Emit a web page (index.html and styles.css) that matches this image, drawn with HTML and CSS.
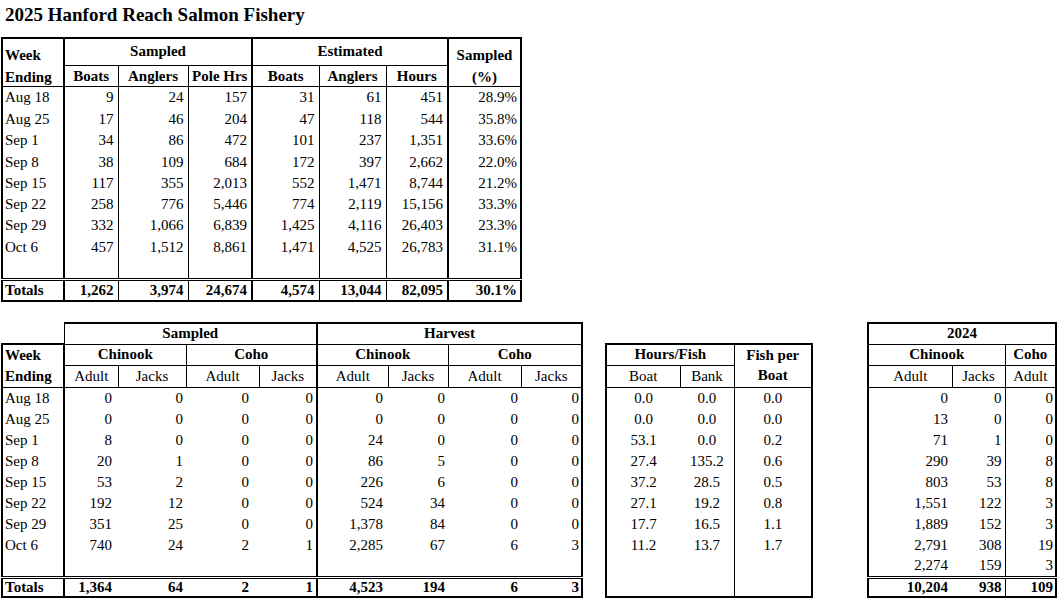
FILE: index.html
```html
<!DOCTYPE html>
<html lang="en">
<head>
<meta charset="utf-8">
<title>2025 Hanford Reach Salmon Fishery</title>
<link rel="stylesheet" href="styles.css">
</head>
<body>
<div class="page">
  <h1 class="title">2025 Hanford Reach Salmon Fishery</h1>

  <table class="sheet effort">
    <colgroup>
      <col class="w62"><col class="w54"><col class="w70"><col class="w64">
      <col class="w67"><col class="w67"><col class="w62"><col class="w73">
    </colgroup>
    <thead>
      <tr class="h27">
        <th rowspan="2" class="lbl stack tk-r"><span class="ln">Week</span><span class="ln">Ending</span></th>
        <th colspan="3" class="grp tk-r">Sampled</th>
        <th colspan="3" class="grp tk-r">Estimated</th>
        <th rowspan="2" class="stack"><span class="ln">Sampled</span><span class="ln">(%)</span></th>
      </tr>
      <tr class="h21">
        <th class="hb low">Boats</th><th class="hb low">Anglers</th><th class="hb low tk-r">Pole Hrs</th>
        <th class="hb low">Boats</th><th class="hb low">Anglers</th><th class="hb low tk-r">Hours</th>
      </tr>
    </thead>
    <tbody>
      <tr class="h22"><td class="lbl tk-r">Aug 18</td><td>9</td><td>24</td><td class="tk-r">157</td><td>31</td><td>61</td><td class="tk-r">451</td><td class="pct">28.9%</td></tr>
      <tr class="h22"><td class="lbl tk-r">Aug 25</td><td>17</td><td>46</td><td class="tk-r">204</td><td>47</td><td>118</td><td class="tk-r">544</td><td class="pct">35.8%</td></tr>
      <tr class="h21"><td class="lbl tk-r">Sep 1</td><td>34</td><td>86</td><td class="tk-r">472</td><td>101</td><td>237</td><td class="tk-r">1,351</td><td class="pct">33.6%</td></tr>
      <tr class="h22"><td class="lbl tk-r">Sep 8</td><td>38</td><td>109</td><td class="tk-r">684</td><td>172</td><td>397</td><td class="tk-r">2,662</td><td class="pct">22.0%</td></tr>
      <tr class="h21"><td class="lbl tk-r">Sep 15</td><td>117</td><td>355</td><td class="tk-r">2,013</td><td>552</td><td>1,471</td><td class="tk-r">8,744</td><td class="pct">21.2%</td></tr>
      <tr class="h21"><td class="lbl tk-r">Sep 22</td><td>258</td><td>776</td><td class="tk-r">5,446</td><td>774</td><td>2,119</td><td class="tk-r">15,156</td><td class="pct">33.3%</td></tr>
      <tr class="h21"><td class="lbl tk-r">Sep 29</td><td>332</td><td>1,066</td><td class="tk-r">6,839</td><td>1,425</td><td>4,116</td><td class="tk-r">26,403</td><td class="pct">23.3%</td></tr>
      <tr class="h22"><td class="lbl tk-r">Oct 6</td><td>457</td><td>1,512</td><td class="tk-r">8,861</td><td>1,471</td><td>4,525</td><td class="tk-r">26,783</td><td class="pct">31.1%</td></tr>
      <tr class="h21"><td class="lbl tk-r"></td><td></td><td></td><td class="tk-r"></td><td></td><td></td><td class="tk-r"></td><td class="pct"></td></tr>
    </tbody>
    <tfoot>
      <tr class="h22 tot"><td class="lbl tk-r">Totals</td><td>1,262</td><td>3,974</td><td class="tk-r">24,674</td><td>4,574</td><td>13,044</td><td class="tk-r">82,095</td><td class="pct">30.1%</td></tr>
    </tfoot>
  </table>

  <div class="lower">
    <table class="sheet catch">
      <colgroup>
        <col class="w62"><col class="w54"><col class="w68"><col class="w73"><col class="w58">
        <col class="w71"><col class="w60"><col class="w73"><col class="w61">
      </colgroup>
      <thead>
        <tr class="h21">
          <td class="blank"></td>
          <th colspan="4" class="grp top tk-r">Sampled</th>
          <th colspan="4" class="grp top tk-r">Harvest</th>
        </tr>
        <tr class="h21">
          <th rowspan="2" class="lbl stack lift top tk-r edge-l"><span class="ln">Week</span><span class="ln">Ending</span></th>
          <th colspan="2" class="hb">Chinook</th>
          <th colspan="2" class="hb tk-r">Coho</th>
          <th colspan="2" class="hb">Chinook</th>
          <th colspan="2" class="hb tk-r">Coho</th>
        </tr>
        <tr class="h22">
          <th class="sub hb">Adult</th><th class="sub hb">Jacks</th>
          <th class="sub hb">Adult</th><th class="sub hb tk-r">Jacks</th>
          <th class="sub hb">Adult</th><th class="sub hb">Jacks</th>
          <th class="sub hb">Adult</th><th class="sub hb tk-r">Jacks</th>
        </tr>
      </thead>
      <tbody>
        <tr class="h22"><td class="lbl tk-r edge-l">Aug 18</td><td class="p6 nl">0</td><td class="p3 nr">0</td><td class="p10 nl">0</td><td class="p3 tk-r">0</td><td class="p5 nl">0</td><td class="p3 nr">0</td><td class="p3 nl">0</td><td class="p2 tk-r">0</td></tr>
        <tr class="h21"><td class="lbl tk-r edge-l">Aug 25</td><td class="p6 nl">0</td><td class="p3 nr">0</td><td class="p10 nl">0</td><td class="p3 tk-r">0</td><td class="p5 nl">0</td><td class="p3 nr">0</td><td class="p3 nl">0</td><td class="p2 tk-r">0</td></tr>
        <tr class="h21"><td class="lbl tk-r edge-l">Sep 1</td><td class="p6 nl">8</td><td class="p3 nr">0</td><td class="p10 nl">0</td><td class="p3 tk-r">0</td><td class="p5 nl">24</td><td class="p3 nr">0</td><td class="p3 nl">0</td><td class="p2 tk-r">0</td></tr>
        <tr class="h21"><td class="lbl tk-r edge-l">Sep 8</td><td class="p6 nl">20</td><td class="p3 nr">1</td><td class="p10 nl">0</td><td class="p3 tk-r">0</td><td class="p5 nl">86</td><td class="p3 nr">5</td><td class="p3 nl">0</td><td class="p2 tk-r">0</td></tr>
        <tr class="h21"><td class="lbl tk-r edge-l">Sep 15</td><td class="p6 nl">53</td><td class="p3 nr">2</td><td class="p10 nl">0</td><td class="p3 tk-r">0</td><td class="p5 nl">226</td><td class="p3 nr">6</td><td class="p3 nl">0</td><td class="p2 tk-r">0</td></tr>
        <tr class="h21"><td class="lbl tk-r edge-l">Sep 22</td><td class="p6 nl">192</td><td class="p3 nr">12</td><td class="p10 nl">0</td><td class="p3 tk-r">0</td><td class="p5 nl">524</td><td class="p3 nr">34</td><td class="p3 nl">0</td><td class="p2 tk-r">0</td></tr>
        <tr class="h21"><td class="lbl tk-r edge-l">Sep 29</td><td class="p6 nl">351</td><td class="p3 nr">25</td><td class="p10 nl">0</td><td class="p3 tk-r">0</td><td class="p5 nl">1,378</td><td class="p3 nr">84</td><td class="p3 nl">0</td><td class="p2 tk-r">0</td></tr>
        <tr class="h21"><td class="lbl tk-r edge-l">Oct 6</td><td class="p6 nl">740</td><td class="p3 nr">24</td><td class="p10 nl">2</td><td class="p3 tk-r">1</td><td class="p5 nl">2,285</td><td class="p3 nr">67</td><td class="p3 nl">6</td><td class="p2 tk-r">3</td></tr>
        <tr class="h21"><td class="lbl tk-r edge-l"></td><td class="nl"></td><td class="nr"></td><td class="nl"></td><td class="tk-r"></td><td class="nl"></td><td class="nr"></td><td class="nl"></td><td class="tk-r"></td></tr>
      </tbody>
      <tfoot>
        <tr class="h20 tot"><td class="lbl tk-r edge-l">Totals</td><td class="p6 nl">1,364</td><td class="p3 nr">64</td><td class="p10 nl">2</td><td class="p3 tk-r">1</td><td class="p5 nl">4,523</td><td class="p3 nr">194</td><td class="p3 nl">6</td><td class="p2 tk-r">3</td></tr>
      </tfoot>
    </table>

    <table class="sheet rates">
      <colgroup><col class="w74"><col class="w54"><col class="w78"></colgroup>
      <thead>
        <tr class="h21">
          <th colspan="2" class="hb top edge-l">Hours/Fish</th>
          <th class="top tk-r lone">Fish per</th>
        </tr>
        <tr class="h22">
          <th class="sub hb edge-l">Boat</th><th class="sub hb">Bank</th><th class="hb tk-r">Boat</th>
        </tr>
      </thead>
      <tbody>
        <tr class="h22"><td class="c edge-l nr">0.0</td><td class="c nl">0.0</td><td class="c tk-r">0.0</td></tr>
        <tr class="h21"><td class="c edge-l nr">0.0</td><td class="c nl">0.0</td><td class="c tk-r">0.0</td></tr>
        <tr class="h21"><td class="c edge-l nr">53.1</td><td class="c nl">0.0</td><td class="c tk-r">0.2</td></tr>
        <tr class="h21"><td class="c edge-l nr">27.4</td><td class="c nl">135.2</td><td class="c tk-r">0.6</td></tr>
        <tr class="h21"><td class="c edge-l nr">37.2</td><td class="c nl">28.5</td><td class="c tk-r">0.5</td></tr>
        <tr class="h21"><td class="c edge-l nr">27.1</td><td class="c nl">19.2</td><td class="c tk-r">0.8</td></tr>
        <tr class="h21"><td class="c edge-l nr">17.7</td><td class="c nl">16.5</td><td class="c tk-r">1.1</td></tr>
        <tr class="h21"><td class="c edge-l nr">11.2</td><td class="c nl">13.7</td><td class="c tk-r">1.7</td></tr>
        <tr class="h21"><td class="c edge-l nr"></td><td class="c nl"></td><td class="c tk-r"></td></tr>
        <tr class="h20 bottom"><td class="c edge-l nr"></td><td class="c nl"></td><td class="c tk-r"></td></tr>
      </tbody>
    </table>

    <table class="sheet prior">
      <colgroup><col class="w84"><col class="w53"><col class="w51"></colgroup>
      <thead>
        <tr class="h21"><th colspan="3" class="top edge-l tk-r hb">2024</th></tr>
        <tr class="h21"><th colspan="2" class="hb edge-l">Chinook</th><th class="hb tk-r">Coho</th></tr>
        <tr class="h22"><th class="sub hb edge-l">Adult</th><th class="sub hb">Jacks</th><th class="sub hb tk-r">Adult</th></tr>
      </thead>
      <tbody>
        <tr class="h22"><td class="p4 edge-l nr">0</td><td class="p3 nl">0</td><td class="p2 tk-r">0</td></tr>
        <tr class="h21"><td class="p4 edge-l nr">13</td><td class="p3 nl">0</td><td class="p2 tk-r">0</td></tr>
        <tr class="h21"><td class="p4 edge-l nr">71</td><td class="p3 nl">1</td><td class="p2 tk-r">0</td></tr>
        <tr class="h21"><td class="p4 edge-l nr">290</td><td class="p3 nl">39</td><td class="p2 tk-r">8</td></tr>
        <tr class="h21"><td class="p4 edge-l nr">803</td><td class="p3 nl">53</td><td class="p2 tk-r">8</td></tr>
        <tr class="h21"><td class="p4 edge-l nr">1,551</td><td class="p3 nl">122</td><td class="p2 tk-r">3</td></tr>
        <tr class="h21"><td class="p4 edge-l nr">1,889</td><td class="p3 nl">152</td><td class="p2 tk-r">3</td></tr>
        <tr class="h21"><td class="p4 edge-l nr">2,791</td><td class="p3 nl">308</td><td class="p2 tk-r">19</td></tr>
        <tr class="h21"><td class="p4 edge-l nr">2,274</td><td class="p3 nl">159</td><td class="p2 tk-r">3</td></tr>
      </tbody>
      <tfoot>
        <tr class="h20 tot"><td class="p4 edge-l nr">10,204</td><td class="p3 nl">938</td><td class="p2 tk-r">109</td></tr>
      </tfoot>
    </table>
  </div>
</div>
</body>
</html>
```

FILE: styles.css
```css
html, body {
  margin: 0;
  padding: 0;
  background: #ffffff;
}

body {
  font-family: "Liberation Serif", "Times New Roman", serif;
  font-size: 15px;
  color: #000000;
}

.page {
  padding: 0 0 0 1px;
}

.title {
  margin: 0;
  padding: 4px 0 0 4px;
  font-family: "Liberation Serif", "Times New Roman", serif;
  font-size: 19px;
  line-height: 22px;
  font-weight: bold;
}

/* ---------- spreadsheet tables ---------- */
.sheet {
  border-collapse: collapse;
  table-layout: fixed;
  font-family: "Liberation Serif", "Times New Roman", serif;
}

.sheet th,
.sheet td {
  padding: 0 4px 0 0;
  font-family: "Liberation Serif", "Times New Roman", serif;
  font-size: 15px;
  line-height: 17px;
  white-space: nowrap;
  vertical-align: middle;
  text-align: right;
  overflow: hidden;
}

.sheet th {
  font-weight: bold;
  text-align: center;
  padding: 0;
}

.sheet .sub {
  font-weight: normal;
}

.h20 { height: 20px; }
.h21 { height: 21px; }
.h22 { height: 22px; }
.h27 { height: 27px; }

.w51 { width: 51px; }
.w53 { width: 53px; }
.w54 { width: 54px; }
.w58 { width: 58px; }
.w60 { width: 60px; }
.w61 { width: 61px; }
.w62 { width: 62px; }
.w64 { width: 64px; }
.w67 { width: 67px; }
.w68 { width: 68px; }
.w70 { width: 70px; }
.w71 { width: 71px; }
.w73 { width: 73px; }
.w74 { width: 74px; }
.w78 { width: 78px; }
.w84 { width: 84px; }

.sheet .lbl {
  text-align: left;
  padding-left: 2px;
  padding-right: 0;
}

.sheet .stack {
  vertical-align: bottom;
  padding-bottom: 0;
}

.sheet .stack.lift {
  padding-bottom: 2px;
}

.stack .ln {
  display: block;
  line-height: 17px;
}

.stack .ln + .ln {
  margin-top: 5px;
}

.lift .ln + .ln {
  margin-top: 4px;
}

.sheet .low {
  vertical-align: bottom;
  padding-bottom: 1px;
}

.sheet .c { text-align: center; padding: 0; }

.sheet .p2 { padding-right: 2px; }
.sheet .p3 { padding-right: 3px; }
.sheet .p4 { padding-right: 4px; }
.sheet .p5 { padding-right: 5px; }
.sheet .p6 { padding-right: 6px; }
.sheet .p10 { padding-right: 10px; }
.sheet .pct { padding-right: 3px; }

/* ---------- borders ---------- */
.effort {
  margin-top: 11px;
  border: 2px solid #000;
}

.effort td,
.effort th {
  border-left: 1px solid #000;
  border-right: 1px solid #000;
}

.effort .grp { border-bottom: 1px solid #000; }
.effort .stack { border-bottom: 1px solid #000; }

.sheet .tk-r { border-right: 2px solid #000; }
.sheet .edge-l { border-left: 2px solid #000; }
.sheet .top { border-top: 2px solid #000; }
.sheet .hb { border-bottom: 1px solid #000; }

.sheet .nl { border-left: none; }
.sheet .nr { border-right: none; }

.tot td {
  font-weight: bold;
  border-top: 3px double #000;
  border-bottom: 2px solid #000;
}

.lower {
  display: flex;
  align-items: flex-start;
  margin-top: 20px;
}

.catch .grp { border-bottom: 1px solid #000; }
.catch th { border-left: 1px solid #000; border-right: 1px solid #000; }
.catch .blank { border: none; }
.catch .stack { border-bottom: 1px solid #000; }

.rates {
  margin-left: 22px;
  margin-top: 21px;
}

.rates th { border-left: 1px solid #000; border-right: 1px solid #000; }
.rates .lone { border-left: 1px solid #000; }
.rates td:nth-child(2) { border-right: 1px solid #000; }
.rates .bottom td { border-bottom: 2px solid #000; }

.prior {
  margin-left: 54px;
}

.prior th { border-left: 1px solid #000; border-right: 1px solid #000; }
.prior td:nth-child(2) { border-right: 1px solid #000; }
```
